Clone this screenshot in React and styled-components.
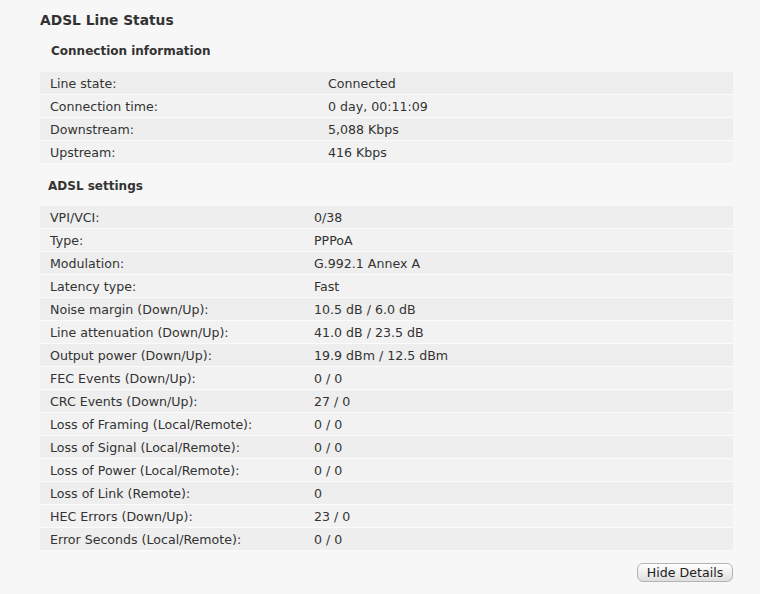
import React from "react";
import styled, { createGlobalStyle } from "styled-components";

const connection = [
  ["Line state:", "Connected"],
  ["Connection time:", "0 day, 00:11:09"],
  ["Downstream:", "5,088 Kbps"],
  ["Upstream:", "416 Kbps"],
];

const settings = [
  ["VPI/VCI:", "0/38"],
  ["Type:", "PPPoA"],
  ["Modulation:", "G.992.1 Annex A"],
  ["Latency type:", "Fast"],
  ["Noise margin (Down/Up):", "10.5 dB / 6.0 dB"],
  ["Line attenuation (Down/Up):", "41.0 dB / 23.5 dB"],
  ["Output power (Down/Up):", "19.9 dBm / 12.5 dBm"],
  ["FEC Events (Down/Up):", "0 / 0"],
  ["CRC Events (Down/Up):", "27 / 0"],
  ["Loss of Framing (Local/Remote):", "0 / 0"],
  ["Loss of Signal (Local/Remote):", "0 / 0"],
  ["Loss of Power (Local/Remote):", "0 / 0"],
  ["Loss of Link (Remote):", "0"],
  ["HEC Errors (Down/Up):", "23 / 0"],
  ["Error Seconds (Local/Remote):", "0 / 0"],
];

const GlobalStyle = createGlobalStyle`
  body {
    margin: 0;
    background: #f7f7f7;
    font-family: "DejaVu Sans", Verdana, sans-serif;
    color: #333;
  }
`;

const Page = styled.div`
  width: 693px;
  padding: 10px 0 0 40px;
`;

const Title = styled.h2`
  margin: 0;
  font-size: 13.8px;
  line-height: 20px;
  font-weight: bold;
  color: #333;
`;

const SectionTitle = styled.h3`
  margin: ${(p) => p.$top}px 0 ${(p) => p.$bottom}px;
  padding-left: ${(p) => p.$indent}px;
  font-size: 12px;
  line-height: 20px;
  font-weight: bold;
  color: #333;
`;

const Table = styled.div`
  display: flex;
  flex-direction: column;
`;

const Row = styled.div`
  display: grid;
  grid-template-columns: ${(p) => p.$labelWidth}px 1fr;
  height: 22px;
  align-items: center;
  border-bottom: 1px solid #fbfbfb;
  background: ${(p) => (p.$odd ? "#eeeeee" : "#f2f2f2")};
  font-size: 12.6px;
`;

const Cell = styled.div`
  padding-left: 10px;
  white-space: nowrap;
`;

const Footer = styled.div`
  display: flex;
  justify-content: flex-end;
  margin-top: 12px;
`;

const Button = styled.button`
  width: 96px;
  height: 19px;
  padding: 0;
  border: 1px solid #b4b4b4;
  border-radius: 6px;
  background: linear-gradient(#ffffff, #ececec 60%, #dedede);
  font-family: "DejaVu Sans", Verdana, sans-serif;
  font-size: 12.6px;
  color: #222;
  cursor: pointer;
`;

const InfoTable = ({ rows, labelWidth }) => (
  <Table>
    {rows.map(([label, value], i) => (
      <Row key={label} $odd={i % 2 === 0} $labelWidth={labelWidth}>
        <Cell>{label}</Cell>
        <Cell>{value}</Cell>
      </Row>
    ))}
  </Table>
);

const App = () => (
  <>
    <GlobalStyle />
    <Page>
      <Title>ADSL Line Status</Title>
      <SectionTitle $top={11} $bottom={11} $indent={11}>
        Connection information
      </SectionTitle>
      <InfoTable rows={connection} labelWidth={278} />
      <SectionTitle $top={12} $bottom={10} $indent={8}>
        ADSL settings
      </SectionTitle>
      <InfoTable rows={settings} labelWidth={264} />
      <Footer>
        <Button>Hide Details</Button>
      </Footer>
    </Page>
  </>
);

export default App;
